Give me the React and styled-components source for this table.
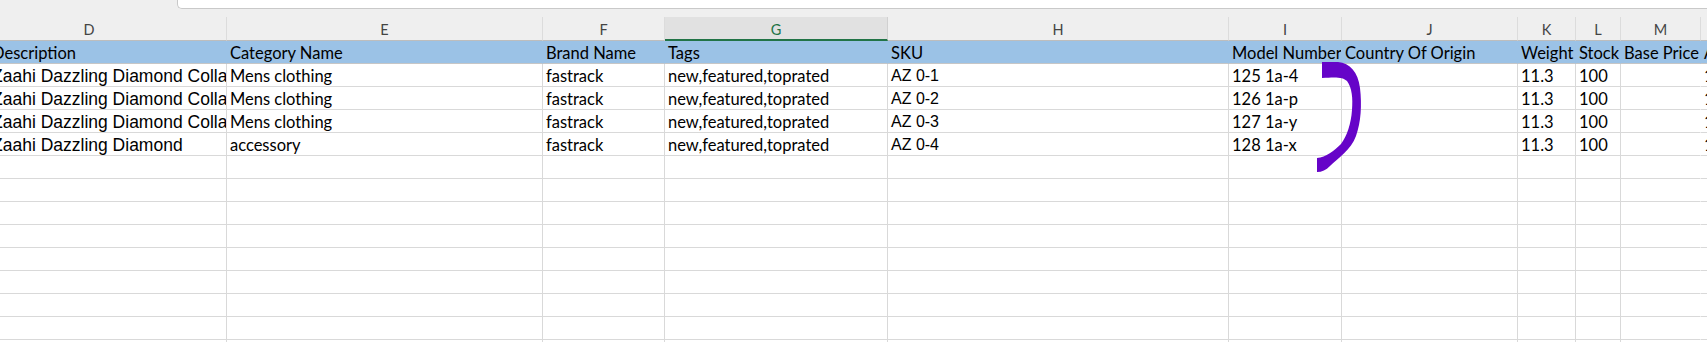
import styled, { createGlobalStyle } from 'styled-components';

// the first column starts left of the visible area; its text sits 40px in
const columns = [
  { letter: 'D', width: 275, title: 'Description', face: 'wide', indent: 40 },
  { letter: 'E', width: 316, title: 'Category Name' },
  { letter: 'F', width: 122, title: 'Brand Name' },
  { letter: 'G', width: 223, title: 'Tags', active: true },
  { letter: 'H', width: 341, title: 'SKU', face: 'code' },
  { letter: 'I', width: 113, title: 'Model Number' },
  { letter: 'J', width: 176, title: 'Country Of Origin' },
  { letter: 'K', width: 58, title: 'Weight' },
  { letter: 'L', width: 45, title: 'Stock' },
  { letter: 'M', width: 80, title: 'Base Price', open: true },
  { letter: 'N', width: 120, title: 'Actual Price' },
];

const products = [
  ['Zaahi Dazzling Diamond Collar Necklace', 'Mens clothing', 'fastrack', 'new,featured,toprated', 'AZ 0-1', '125 1a-4', '', '11.3', '100', '', '1299'],
  ['Zaahi Dazzling Diamond Collar Necklace', 'Mens clothing', 'fastrack', 'new,featured,toprated', 'AZ 0-2', '126 1a-p', '', '11.3', '100', '', '1299'],
  ['Zaahi Dazzling Diamond Collar Necklace', 'Mens clothing', 'fastrack', 'new,featured,toprated', 'AZ 0-3', '127 1a-y', '', '11.3', '100', '', '1299'],
  ['Zaahi Dazzling Diamond', 'accessory', 'fastrack', 'new,featured,toprated', 'AZ 0-4', '128 1a-x', '', '11.3', '100', '', '1299'],
];

const EMPTY_ROWS = 9;

const GlobalStyle = createGlobalStyle`
  html, body {
    margin: 0;
    background: #fff;
    overflow: hidden;
  }
`;

const App = () => {
  const blank = columns.map(() => '');
  const rows = [...products, ...Array.from({ length: EMPTY_ROWS }, () => blank)];
  const template = columns.map((c) => `${c.width}px`).join(' ');

  return (
    <>
      <GlobalStyle />
      <Page>
        <TopStrip>
          <NameBox />
        </TopStrip>
        <SheetGrid $template={template}>
          {columns.map((col) => (
            <LetterCell key={`l-${col.letter}`} $active={col.active}>
              {col.letter}
            </LetterCell>
          ))}
          {columns.map((col) => (
            <HeadCell key={`h-${col.letter}`} $indent={col.indent}>
              {col.title}
            </HeadCell>
          ))}
          {rows.map((row, r) =>
            row.map((value, c) => (
              <Cell
                key={`${r}-${c}`}
                $face={columns[c].face}
                $open={columns[c].open}
                $indent={columns[c].indent}
              >
                {value}
              </Cell>
            ))
          )}
        </SheetGrid>
        {/* pen mark drawn over the model numbers */}
        <PenMark viewBox="0 0 1707 342" width="1707" height="342">
          <path
            d="M1322,62 L1338,62 C1350,63 1358,72 1360,88 C1362,105 1361,122 1356,136 C1351,150 1338,158 1330,166 C1326,170 1322,172 1317,172 L1317,158 C1326,157 1334,151 1341,144 C1347,136 1351,124 1352,110 C1353,98 1352,88 1347,81 C1343,77 1336,77 1322,78 Z"
            fill="#6604c8"
          />
        </PenMark>
      </Page>
    </>
  );
};

const Page = styled.div`
  position: relative;
  width: 1707px;
  height: 342px;
  overflow: hidden;
  background: #fff;
`;

const TopStrip = styled.div`
  height: 17px;
  background: #efefef;
`;

const NameBox = styled.div`
  box-sizing: border-box;
  margin-left: 177px;
  height: 9px;
  background: #fff;
  border-left: 1px solid #c9c9c9;
  border-bottom: 1px solid #c9c9c9;
  border-bottom-left-radius: 5px;
`;

const SheetGrid = styled.div`
  display: grid;
  grid-template-columns: ${(props) => props.$template};
  grid-template-rows: 24px 23px;
  grid-auto-rows: 23px;
  width: max-content;
  margin-left: -48px;
`;

const baseCell = `
  box-sizing: border-box;
  overflow: hidden;
  white-space: nowrap;
  color: #000;
`;

const LetterCell = styled.div`
  ${baseCell}
  padding-top: 1px;
  text-align: center;
  font-family: Lato, 'Open Sans', sans-serif;
  font-size: 14.5px;
  line-height: 23px;
  color: ${(props) => (props.$active ? '#217346' : '#444')};
  background: ${(props) => (props.$active ? '#e1e1e1' : '#efefef')};
  border-right: 1px solid ${(props) => (props.$active ? '#d0d0d0' : '#dcdcdc')};
  border-bottom: ${(props) =>
    props.$active ? '2px solid #217346' : '1px solid #bdbdbd'};
`;

const HeadCell = styled.div`
  ${baseCell}
  padding-left: ${(props) => props.$indent || 3}px;
  padding-top: 0.5px;
  font-family: Lato, 'Open Sans', sans-serif;
  font-size: 16.5px;
  line-height: 22px;
  background: #9bc2e6;
  border-right: 1px solid #9bc2e6;
  border-bottom: 1px solid #c6c6c6;
`;

const faces = {
  wide: `
    padding-top: 1px;
    font-family: 'Liberation Sans', Arial, sans-serif;
    font-size: 17.5px;
  `,
  code: `
    padding-top: 1px;
    font-family: 'Liberation Sans', Arial, sans-serif;
    font-size: 16px;
  `,
  plain: `
    padding-top: 0.5px;
    font-family: Lato, 'Open Sans', sans-serif;
    font-size: 16.5px;
  `,
};

const Cell = styled.div`
  ${baseCell}
  padding-left: ${(props) => props.$indent || 3}px;
  line-height: 22px;
  ${(props) => faces[props.$face || 'plain']}
  background: #fff;
  border-right: 1px solid ${(props) => (props.$open ? '#fff' : '#d9d9d9')};
  border-bottom: 1px solid #d9d9d9;
`;

const PenMark = styled.svg`
  position: absolute;
  top: 0;
  left: 0;
  pointer-events: none;
`;

export default App;
